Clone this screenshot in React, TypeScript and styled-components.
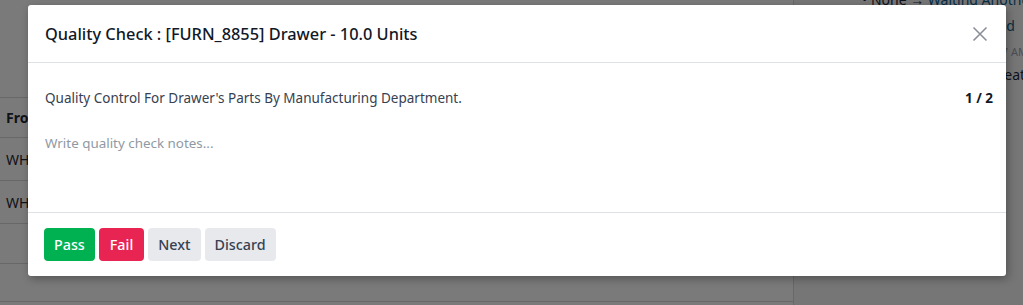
import { createGlobalStyle, styled } from 'styled-components';

const GlobalStyle = createGlobalStyle`
  html, body {
    margin: 0;
    padding: 0;
    width: 1023px;
    height: 305px;
    overflow: hidden;
    background: #ffffff;
    font-family: 'Noto Sans', 'Open Sans', sans-serif;
  }
`;

const Page = styled.div`
  position: relative;
  width: 1023px;
  height: 305px;
  display: flex;
  overflow: hidden;
`;

const MainArea = styled.div`
  width: 794px;
  flex-shrink: 0;
  display: flex;
  flex-direction: column;
  padding-top: 97px;
  box-sizing: border-box;
  border-right: 1px solid #d8dadd;
`;

const TableRow = styled.div<{ $header?: boolean; $height?: number }>`
  height: ${({ $header, $height }) => ($height ?? ($header ? 40 : 42))}px;
  flex-shrink: 0;
  border-top: 1px solid #d8dadd;
  display: flex;
  align-items: center;
  padding-left: 6px;
  font-size: 14px;
  font-weight: ${({ $header }) => ($header ? 700 : 400)};
  color: #1f2937;
  box-sizing: border-box;
`;

const Chatter = styled.div`
  flex: 1;
  background: #f6f7f9;
  padding-left: 68px;
  margin-top: -13px;
  font-size: 14px;
  color: #1f2937;
`;

const ChatterLine = styled.div<{ $indent?: number; $height: number; $muted?: boolean }>`
  height: ${({ $height }) => $height}px;
  line-height: ${({ $height }) => $height}px;
  padding-left: ${({ $indent }) => $indent ?? 0}px;
  font-size: ${({ $muted }) => ($muted ? '11px' : '14px')};
  color: ${({ $muted }) => ($muted ? '#9ca3af' : '#1f2937')};
  white-space: nowrap;
`;

const Link = styled.span`
  color: #0f5e8c;
`;

const Backdrop = styled.div`
  position: absolute;
  inset: 0;
  background: rgba(0, 0, 0, 0.52);
`;

const Modal = styled.div`
  position: absolute;
  left: 28px;
  top: 5px;
  width: 978px;
  height: 271px;
  background: #ffffff;
  border-radius: 3px;
  box-shadow: 2px 3px 8px rgba(0, 0, 0, 0.3);
  display: flex;
  flex-direction: column;
  color: #212529;
`;

const Header = styled.div`
  height: 57px;
  border-bottom: 1px solid #dee2e6;
  display: flex;
  align-items: center;
  justify-content: space-between;
  padding: 0 16px 0 17px;
`;

const Title = styled.h4`
  margin: 0;
  font-size: 16.35px;
  font-weight: 500;
  color: #111827;
`;

const CloseButton = styled.button`
  border: none;
  background: none;
  padding: 0;
  width: 20px;
  height: 20px;
  display: flex;
  align-items: center;
  justify-content: center;
  cursor: pointer;
`;

const Body = styled.div`
  flex: 1;
  padding: 25px 13px 0 17px;
  border-bottom: 1px solid #dee2e6;
`;

const InfoRow = styled.div`
  display: flex;
  justify-content: space-between;
  font-size: 13.5px;
  color: #374151;
  line-height: 20px;
`;

const Counter = styled.span`
  font-weight: 700;
  color: #111827;
`;

const Notes = styled.div`
  margin-top: 26px;
  font-size: 13.4px;
  color: #8f99a4;
`;

const Footer = styled.div`
  height: 63px;
  display: flex;
  align-items: center;
  gap: 4px;
  padding: 0 16px;
`;

const variants = {
  pass: { bg: '#00b152', fg: '#ffffff', px: 10 },
  fail: { bg: '#e82452', fg: '#ffffff', px: 11 },
  plain: { bg: '#e7e9ed', fg: '#374151', px: 10 },
};

const Button = styled.button<{ $variant: keyof typeof variants }>`
  height: 33px;
  padding: 0 ${({ $variant }) => variants[$variant].px}px;
  border: none;
  border-radius: 4px;
  font-family: inherit;
  font-size: 14.3px;
  font-weight: 500;
  background: ${({ $variant }) => variants[$variant].bg};
  color: ${({ $variant }) => variants[$variant].fg};
  cursor: pointer;
`;

export default function App() {
  return (
    <>
      <GlobalStyle />
      <Page>
        <MainArea>
          <TableRow $header>From</TableRow>
          <TableRow $height={43}>WH/Stock</TableRow>
          <TableRow $height={43}>WH/Stock</TableRow>
          <TableRow $height={40} />
          <TableRow $height={38} />
          <TableRow />
        </MainArea>
        <Chatter>
          <ChatterLine $height={26}>
            • None → <Link>Waiting Another</Link>
          </ChatterLine>
          <ChatterLine $height={26} $indent={83}>
            <Link>Confirmed</Link>
          </ChatterLine>
          <ChatterLine $height={26} $indent={118} $muted>
            10:07 AM
          </ChatterLine>
          <ChatterLine $height={20} $indent={128}>
            Created
          </ChatterLine>
        </Chatter>
        <Backdrop />
        <Modal>
          <Header>
            <Title>Quality Check : [FURN_8855] Drawer - 10.0 Units</Title>
            <CloseButton aria-label="Close">
              <svg width="16" height="16" viewBox="0 0 16 16">
                <path d="M1.5 1.5 L14.5 14.5 M14.5 1.5 L1.5 14.5" stroke="#8a8f98" strokeWidth="1.6" />
              </svg>
            </CloseButton>
          </Header>
          <Body>
            <InfoRow>
              <span>Quality Control For Drawer's Parts By Manufacturing Department.</span>
              <Counter>1 / 2</Counter>
            </InfoRow>
            <Notes>Write quality check notes...</Notes>
          </Body>
          <Footer>
            <Button $variant="pass">Pass</Button>
            <Button $variant="fail">Fail</Button>
            <Button $variant="plain">Next</Button>
            <Button $variant="plain">Discard</Button>
          </Footer>
        </Modal>
      </Page>
    </>
  );
}
